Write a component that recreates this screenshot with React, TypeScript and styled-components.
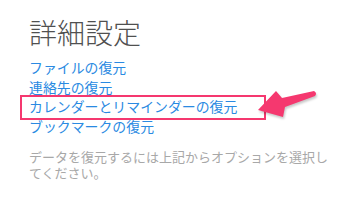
import React from "react";
import styled, { createGlobalStyle } from "styled-components";

const Pink = "#f5386f";

const GlobalStyle = createGlobalStyle`
  html, body {
    margin: 0;
    padding: 0;
    background: #ffffff;
  }
  body {
    font-family: "Noto Sans CJK JP", "Noto Sans", sans-serif;
  }
`;

const Page = styled.div`
  position: relative;
  width: 340px;
  height: 210px;
  overflow: hidden;
  display: flex;
  flex-direction: column;
  padding: 16px 0 0 29px;
  box-sizing: border-box;
`;

const Title = styled.h1`
  margin: 0;
  font-size: 28px;
  line-height: 32px;
  font-weight: 300;
  color: #505050;
`;

const LinkList = styled.ul`
  list-style: none;
  margin: 10px 0 0;
  padding: 0;
  display: flex;
  flex-direction: column;
`;

const LinkItem = styled.li<{ $highlight?: boolean }>`
  position: relative;
  font-size: 13.9px;
  line-height: 19.5px;
  color: #2a8ae2;
  white-space: nowrap;

  ${({ $highlight }) =>
    $highlight &&
    `
    &::after {
      content: "";
      position: absolute;
      left: -9px;
      top: -2px;
      width: 246px;
      height: 25px;
      box-sizing: border-box;
      border: 2px solid ${Pink};
    }
  `}
`;

const Hint = styled.p`
  margin: 13px 0 0;
  width: 300px;
  font-size: 13px;
  line-height: 15.5px;
  color: #a8a8a8;
`;

const Arrow = styled.svg`
  position: absolute;
  left: 0;
  top: 0;
  pointer-events: none;
  filter: drop-shadow(1px 2px 1px rgba(0, 0, 0, 0.22));
`;

const links = [
  "ファイルの復元",
  "連絡先の復元",
  "カレンダーとリマインダーの復元",
  "ブックマークの復元",
];

export default function App() {
  return (
    <>
      <GlobalStyle />
      <Page>
        <Title>詳細設定</Title>
        <LinkList>
          {links.map((text, i) => (
            <LinkItem key={text} $highlight={i === 2}>
              {text}
            </LinkItem>
          ))}
        </LinkList>
        <Hint>データを復元するには上記からオプションを選択してください。</Hint>
        <Arrow width="340" height="210" viewBox="0 0 340 210">
          <path
            d="M258 110 L276 91 L282 98 L314 91 Q317.5 93 315 96 L285 107 L283 117 Z"
            fill={Pink}
          />
        </Arrow>
      </Page>
    </>
  );
}
